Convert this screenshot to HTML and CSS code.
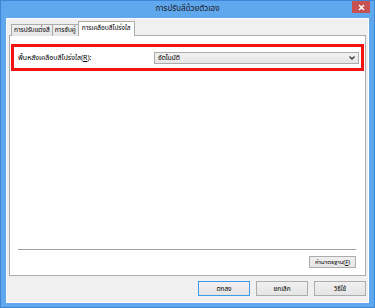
FILE: index.html
```html
<!DOCTYPE html>
<html lang="th">
<head>
  <meta charset="UTF-8">
  <title>การปรับสีด้วยตัวเอง</title>
  <link rel="stylesheet" href="styles.css">
</head>
<body>
  <div class="window">
    <div class="titlebar">
      <span></span>
      <span class="title">การปรับสีด้วยตัวเอง</span>
      <button class="close" type="button">
        <svg width="7" height="7" viewBox="0 0 7 7"><path d="M1 1L6 6M6 1L1 6" stroke="#fff" stroke-width="1.6"/></svg>
      </button>
    </div>
    <div class="client">
      <div class="tabs">
        <div class="tab">การปรับแต่งสี</div>
        <div class="tab">การจับคู่</div>
        <div class="tab active">การเคลือบสีโปร่งใส</div>
      </div>
      <div class="page">
        <div class="highlight">
          <label class="field-label" for="bg">พื้นหลังเคลือบสีโปร่งใส(<u>R</u>):</label>
          <div class="combo" id="bg">
            <span>อัตโนมัติ</span>
            <svg width="6" height="4" viewBox="0 0 6 4"><path d="M0.5 0.5L3 3L5.5 0.5" fill="none" stroke="#333" stroke-width="1.3"/></svg>
          </div>
        </div>
        <div class="spacer"></div>
        <div class="separator"></div>
        <div class="page-foot">
          <button class="btn small" type="button">ค่ามาตรฐาน(<u>F</u>)</button>
        </div>
      </div>
      <div class="actions">
        <button class="btn default" type="button">ตกลง</button>
        <button class="btn" type="button">ยกเลิก</button>
        <button class="btn" type="button">วิธีใช้</button>
      </div>
    </div>
  </div>
</body>
</html>
```

FILE: styles.css
```css
body {
  margin: 0;
  background: #ffffff;
  font-family: Tahoma, "Noto Sans Thai", "Noto Sans", "DejaVu Sans", sans-serif;
  font-size: 7px;
  color: #000;
}
.window {
  width: 375px;
  height: 308px;
  box-sizing: border-box;
  background: #60a8ee;
  border: 1px solid #3f86d6;
  display: flex;
  flex-direction: column;
}
.titlebar {
  height: 17px;
  display: grid;
  grid-template-columns: 1fr auto 1fr;
  align-items: start;
}
.title {
  font-size: 8px;
  line-height: 17px;
  color: #1a1a1a;
}
.close {
  justify-self: end;
  margin-right: 4px;
  width: 18px;
  height: 12px;
  padding: 0;
  border: none;
  background: #c75050;
  display: flex;
  align-items: center;
  justify-content: center;
}
.client {
  flex: 1;
  margin: 0 5px 4px 5px;
  background: #f0f0f0;
  border: 1px solid #ffffff;
  padding: 3px 2px 0 2px;
  display: flex;
  flex-direction: column;
}
.tabs {
  display: flex;
  align-items: flex-end;
  padding-left: 2px;
  height: 14px;
  margin-bottom: -1px;
  position: relative;
}
.tab {
  height: 11px;
  line-height: 11px;
  padding: 0 2px;
  border: 1px solid #acacac;
  border-bottom: none;
  background: linear-gradient(#f0f0f0, #e5e5e5);
  font-size: 6.5px;
  margin-right: -1px;
}
.tab.active {
  height: 14px;
  line-height: 13px;
  background: #fff;
  padding: 0 3px;
  position: relative;
  z-index: 1;
}
.page {
  height: 241px;
  box-sizing: border-box;
  background: #fff;
  border: 1px solid #acacac;
  display: flex;
  flex-direction: column;
  padding: 0 1px;
}
.highlight {
  margin-top: 8px;
  height: 27px;
  box-sizing: border-box;
  border: 3px solid #f21414;
  display: flex;
  align-items: center;
  padding: 0 2px 0 4px;
}
.field-label {
  width: 136px;
  font-size: 7px;
  color: #000;
}
.combo {
  flex: 1;
  height: 12px;
  box-sizing: border-box;
  border: 1px solid #acacac;
  background: linear-gradient(#f2f2f2, #e5e5e5);
  display: flex;
  align-items: center;
  justify-content: space-between;
  padding: 0 3px 0 3px;
  font-size: 6.5px;
  color: #000;
}
.spacer {
  flex: 1;
}
.separator {
  margin: 0 8px 0 7px;
  border-top: 1px solid #a0a0a0;
  border-bottom: 1px solid #fff;
}
.page-foot {
  display: flex;
  justify-content: flex-end;
  padding: 5px 8px 7px 0;
}
.btn {
  font-family: inherit;
  font-size: 6.5px;
  width: 52px;
  height: 15px;
  padding: 0;
  border: 1px solid #acacac;
  background: linear-gradient(#f0f0f0, #e5e5e5);
  color: #000;
}
.btn.small {
  width: 47px;
  height: 12px;
  font-size: 6px;
}
.btn.default {
  border-color: #3c9ae8;
}
.actions {
  display: flex;
  justify-content: flex-end;
  gap: 6px;
  margin-top: 5px;
}
```
